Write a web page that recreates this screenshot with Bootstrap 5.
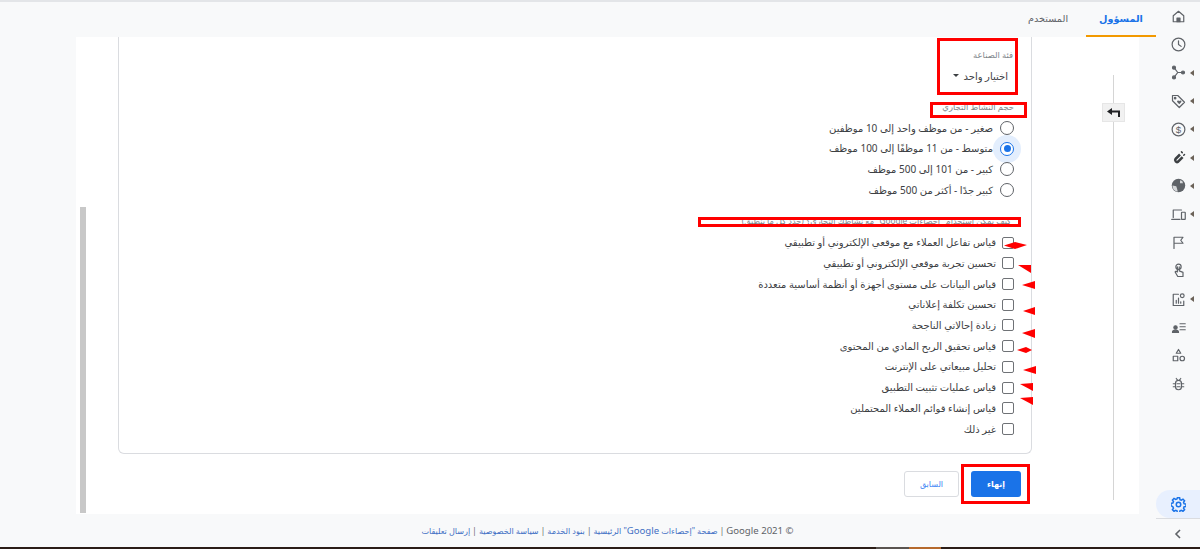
<!doctype html>
<html lang="ar" dir="rtl">
<head>
<meta charset="utf-8">
<link href="https://cdn.jsdelivr.net/npm/bootstrap@5.3.0/dist/css/bootstrap.min.css" rel="stylesheet">
<style>
html,body{height:549px;overflow:hidden}
body{background:#f8f9fa;font-family:"Noto Sans","Liberation Sans","DejaVu Sans",sans-serif;font-size:10px;color:#3c4043;position:relative;border-top:2px solid #e3e5e8}
.rail{width:44px;flex:none;height:547px}
.rail-btn{height:28.3px;flex:none;position:relative;display:flex;align-items:center;justify-content:center}
.rail-btn svg{width:15px;height:15px;fill:none;stroke:#5f6368;stroke-width:1.6;stroke-linecap:round;stroke-linejoin:round}
.rail-btn.caret::after{content:"";position:absolute;right:6px;top:50%;margin-top:-3px;border:3px solid transparent;border-right:4px solid #6b6258;border-left:0}
.rail-active{position:absolute;right:0;width:44px;top:488px;height:28px;background:#e8f0fe;border-top-left-radius:14px;border-bottom-left-radius:14px;display:flex;align-items:center;justify-content:center}
.rail-active svg{width:15px;height:15px;stroke:#1a73e8;fill:none;stroke-width:2}
.rail-foot{position:absolute;right:0;width:44px;top:516px;border-top:1px solid #dadce0;height:30px;display:flex;align-items:center;justify-content:center}
.rail-foot svg{width:12px;height:12px;stroke:#5f6368;fill:none;stroke-width:1.6}
.work{width:1156px;flex:none}
.tabbar{height:35px}
.tab-item{height:35px;line-height:33px;font-size:9.7px;color:#5f6368;width:76px;text-align:center;white-space:nowrap}
.tab-on{width:70px;color:#1a73e8;border-bottom:2px solid #f29900;font-weight:700}
.panel{background:#fff;margin-right:17px;margin-left:76px;height:477px;position:relative}
.mid-col{width:107px;flex:none;position:relative}
.vline{position:absolute;right:25px;width:1px;top:38px;height:425px;background:#d5d5d5}
.back-btn{position:absolute;right:14px;top:66px;width:23px;height:19px;background:#f1f1f1;border:1px solid #e6e6e6;display:flex;align-items:center;justify-content:center}
.back-btn svg{width:13px;height:9px}
.formcard{width:914px;height:417px;border:1px solid #dadce0;border-top:0;border-radius:0 0 6px 6px}
.field-cap{font-size:8.4px;color:#80868b}
.cap-one{padding:12px 18px 0 0}
.cap-two{padding:17px 17px 4.4px 0}
.picker{padding:7px 23px 0 0;font-size:10px}
.choice{font-size:10px;color:#3c4043;line-height:20.7px;height:20.7px;white-space:nowrap}
.gap-seven{gap:7px}
.gap-six{gap:6px}
.group-pad{padding-right:17px}
.group-space{height:32px}
.radio-ring{width:14px;height:14px;border:1.3px solid #5f6368;border-radius:50%;flex:none;position:relative;background:#fff}
.radio-on{border-color:#1a73e8;box-shadow:0 0 0 7px #e3eefd}
.radio-on::after{content:"";position:absolute;inset:2.5px;border-radius:50%;background:#1a73e8}
.check-box{width:12px;height:12px;border:1.3px solid #6f7276;border-radius:2px;flex:none;background:#fff}
.scroll-thumb{position:absolute;left:4px;top:170px;height:306px;width:6px;background:#c8c8c8}
.btn-finish{position:absolute;background:#1a73e8;color:#fff;border:0;border-radius:3px;width:50px;height:26px;font-size:8px;font-weight:600;padding:0;left:895px;top:434px}
.btn-prev{position:absolute;background:#fff;color:#4285f4;border:1px solid #dadce0;border-radius:3px;width:55px;height:26px;font-size:8px;padding:0;left:828px;top:434px}
.page-foot{font-size:8.1px;height:33px;color:#5f6368;margin-left:76px;margin-right:17px;text-align:center;line-height:33px}
.page-foot a{color:#3f6fc4;text-decoration:none}
.foot-latin{font-size:9.6px}
.strip-base{position:absolute;left:0;right:0;bottom:0;height:2px;background:#2b1d17}
.strip-grey{position:absolute;left:876px;width:33px;bottom:0;height:2px;background:#5a5450}
.strip-orange{position:absolute;left:909px;width:32px;bottom:0;height:2px;background:#b5692c}
.ink-layer{position:absolute;left:0;top:-2px;width:1200px;height:549px;pointer-events:none}
.redacted{position:absolute;left:698px;top:215px;width:323px;height:10px;border:3px solid #f00;background:#fff;overflow:hidden}
.redacted-line{font-size:8.2px;line-height:12px;color:#80868b;white-space:nowrap;padding-right:7px;margin-top:-5px}
</style>
</head>
<body>
<div class="d-flex">
  <div class="rail d-flex flex-column">
    <div class="rail-btn"><svg viewBox="0 0 20 20"><path d="M3 9l7-6 7 6v8H3z"/><path d="M8 17v-5h4v5z" fill="#5f6368"/></svg></div>
    <div class="rail-btn"><svg viewBox="0 0 20 20"><circle cx="10" cy="10" r="8.500"/><path d="M10 5v5l3.500 2.500"/></svg></div>
    <div class="rail-btn caret"><svg viewBox="0 0 20 20"><circle cx="4" cy="3.500" r="2" fill="#5f6368"/><circle cx="4" cy="16.500" r="2" fill="#5f6368"/><circle cx="16" cy="10" r="2" fill="#5f6368"/><path d="M4 3.500L9 10h7M4 16.500L9 10"/></svg></div>
    <div class="rail-btn caret"><svg viewBox="0 0 20 20"><path d="M2 2h7l9 9-7 7-9-9z"/><circle cx="5.500" cy="5.500" r="1" fill="#5f6368"/><path d="M11 13.500l-2.500-2.500a1.400 1.400 0 0 1 2-2l.5.500.5-.5a1.400 1.400 0 0 1 2 2z" fill="#5f6368" stroke="none"/></svg></div>
    <div class="rail-btn caret"><svg viewBox="0 0 20 20"><circle cx="10" cy="10" r="8.500"/><text x="10" y="14.500" text-anchor="middle" font-size="13" fill="#5f6368" stroke="none" font-family="Liberation Sans">$</text></svg></div>
    <div class="rail-btn caret"><svg viewBox="0 0 20 20"><path d="M12 6l-6 6a2.500 2.500 0 0 0 3.500 3.500l6-6" stroke="#3c4043" stroke-width="3.400" stroke-linecap="butt"/><path d="M14 2.500l1 1M18 6l-1 1" stroke="#3c4043" stroke-width="2"/></svg></div>
    <div class="rail-btn caret"><svg viewBox="0 0 20 20"><circle cx="10" cy="10" r="9" fill="#5f6368" stroke="none"/><path d="M2 10l5 1 1 3 1 4c-4 0-7-3-7-8zM12 3l3 1 1 3-4 0z" fill="#d6d8da" stroke="none"/></svg></div>
    <div class="rail-btn caret"><svg viewBox="0 0 20 20"><path d="M3 14V4h11M1 16.500h11"/><rect x="14" y="7" width="5" height="9.500" rx=".5"/></svg></div>
    <div class="rail-btn"><svg viewBox="0 0 20 20"><path d="M4 18V3h12l-3 4 3 4H4"/></svg></div>
    <div class="rail-btn"><svg viewBox="0 0 20 20"><circle cx="10" cy="5" r="3.500"/><path d="M8.500 5v7l-2-1-1 1 3.500 6h7v-5.500l-5-2V5"/></svg></div>
    <div class="rail-btn caret"><svg viewBox="0 0 20 20"><path d="M10 3H3v15h14v-6M7 15v-4M10 15V8M13 15v-2"/><circle cx="15" cy="5" r="2.500"/></svg></div>
    <div class="rail-btn"><svg viewBox="0 0 20 20"><circle cx="6" cy="10" r="2.200" fill="#5f6368"/><path d="M2 16.500c0-4 8-4 8 0zM12 5h7M12 9h7M12 13h7" fill="#5f6368"/></svg></div>
    <div class="rail-btn"><svg viewBox="0 0 20 20"><path d="M10 2l3 5H7z"/><rect x="3" y="11" width="6" height="6"/><circle cx="15" cy="14" r="3"/></svg></div>
    <div class="rail-btn"><svg viewBox="0 0 20 20"><rect x="6" y="4.500" width="8" height="12.500" rx="4"/><path d="M3 9h3M14 9h3M3 13h3M14 13h3M7 2l2 2.500M13 2l-2 2.500M8 9h4M8 13h4"/></svg></div>
    <div class="rail-active"><svg viewBox="0 0 20 20"><circle cx="10" cy="10" r="3"/><path d="M8.500 1h3l.5 2.500 1.800.8 2.200-1.400 2.100 2.100-1.400 2.200.8 1.800 2.500.5v3l-2.500.5-.8 1.800 1.400 2.200-2.100 2.100-2.200-1.400-1.800.8-.5 2.500h-3l-.5-2.500-1.800-.8-2.200 1.400-2.100-2.100 1.400-2.200-.8-1.800L0 11.500v-3l2.500-.5.8-1.800-1.400-2.200L4 1.900l2.200 1.400 1.800-.8z"/></svg></div>
    <div class="rail-foot"><svg viewBox="0 0 12 12"><path d="M8 2L4 6l4 4"/></svg></div>
  </div>
  <div class="work d-flex flex-column">
    <div class="tabbar d-flex"><div class="tab-item tab-on">المسؤول</div><div class="tab-item">المستخدم</div></div>
    <div class="panel d-flex">
      <div class="mid-col">
        <div class="vline"></div>
        <div class="back-btn"><svg viewBox="0 0 13 9"><path d="M5 0L0 3.500 5 7V4.500h6V9h2V2.500H5z" fill="#202124"/></svg></div>
      </div>
      <div class="formcard">
        <div class="field-cap cap-one">فئة الصناعة</div>
        <div class="d-flex align-items-center gap-1 picker">اختيار واحد <span class="dropdown-toggle"></span></div>
        <div class="field-cap cap-two">حجم النشاط التجاري</div>
        <div class="group-pad">
          <div class="choice d-flex align-items-center gap-seven"><span class="radio-ring"></span><span>صغير - من موظف واحد إلى 10 موظفين</span></div>
          <div class="choice d-flex align-items-center gap-seven"><span class="radio-ring radio-on"></span><span>متوسط - من 11 موظفًا إلى 100 موظف</span></div>
          <div class="choice d-flex align-items-center gap-seven"><span class="radio-ring"></span><span>كبير - من 101 إلى 500 موظف</span></div>
          <div class="choice d-flex align-items-center gap-seven"><span class="radio-ring"></span><span>كبير جدًا - أكثر من 500 موظف</span></div>
        </div>
        <div class="group-space"></div>
        <div class="group-pad d-flex flex-column">
          <div class="choice d-flex align-items-center gap-six"><span class="check-box"></span><span>قياس تفاعل العملاء مع موقعي الإلكتروني أو تطبيقي</span></div>
          <div class="choice d-flex align-items-center gap-six"><span class="check-box"></span><span>تحسين تجربة موقعي الإلكتروني أو تطبيقي</span></div>
          <div class="choice d-flex align-items-center gap-six"><span class="check-box"></span><span>قياس البيانات على مستوى أجهزة أو أنظمة أساسية متعددة</span></div>
          <div class="choice d-flex align-items-center gap-six"><span class="check-box"></span><span>تحسين تكلفة إعلاناتي</span></div>
          <div class="choice d-flex align-items-center gap-six"><span class="check-box"></span><span>زيادة إحالاتي الناجحة</span></div>
          <div class="choice d-flex align-items-center gap-six"><span class="check-box"></span><span>قياس تحقيق الربح المادي من المحتوى</span></div>
          <div class="choice d-flex align-items-center gap-six"><span class="check-box"></span><span>تحليل مبيعاتي على الإنترنت</span></div>
          <div class="choice d-flex align-items-center gap-six"><span class="check-box"></span><span>قياس عمليات تثبيت التطبيق</span></div>
          <div class="choice d-flex align-items-center gap-six"><span class="check-box"></span><span>قياس إنشاء قوائم العملاء المحتملين</span></div>
          <div class="choice d-flex align-items-center gap-six"><span class="check-box"></span><span>غير ذلك</span></div>
        </div>
      </div>
      <div class="scroll-thumb"></div>
      <button class="btn-finish">إنهاء</button>
      <button class="btn-prev">السابق</button>
    </div>
    <div class="page-foot"><span class="foot-latin">© Google 2021</span> | <a href="#">صفحة "إحصاءات <span class="foot-latin">Google</span>" الرئيسية</a> | <a href="#">بنود الخدمة</a> | <a href="#">سياسة الخصوصية</a> | <a href="#">إرسال تعليقات</a></div>
  </div>
</div>
<div class="strip-base"></div><div class="strip-grey"></div><div class="strip-orange"></div>
<div class="redacted"><div class="redacted-line">كيف يمكن استخدام "إحصاءات Google" مع نشاطك التجاري؟ (حدّد كل ما ينطبق)</div></div>
<svg class="ink-layer" viewBox="0 0 1200 549">
  <g fill="none" stroke="#f00" stroke-width="3">
    <rect x="938.500" y="39.500" width="78" height="54"/>
    <rect x="931.500" y="103.500" width="94" height="13"/>
    <rect x="962.500" y="465.500" width="66" height="37"/>
  </g>
  <g fill="#f00">
    <polygon points="1004,245.500 1015,242 1027,245 1015,249"/>
    <polygon points="1018,265 1031,265 1031,273"/>
    <polygon points="1022,285 1035,281 1035,289"/>
    <polygon points="1023,311 1035,307 1035,315"/>
    <polygon points="1022,333 1035,329 1035,338"/>
    <polygon points="1017,350 1026,347 1032,350 1026,353"/>
    <polygon points="1023,370 1036,366 1036,374"/>
    <polygon points="1020,384 1033,383 1033,391"/>
    <polygon points="1020,398 1033,397 1033,405"/>
  </g>
</svg>
</body>
</html>
